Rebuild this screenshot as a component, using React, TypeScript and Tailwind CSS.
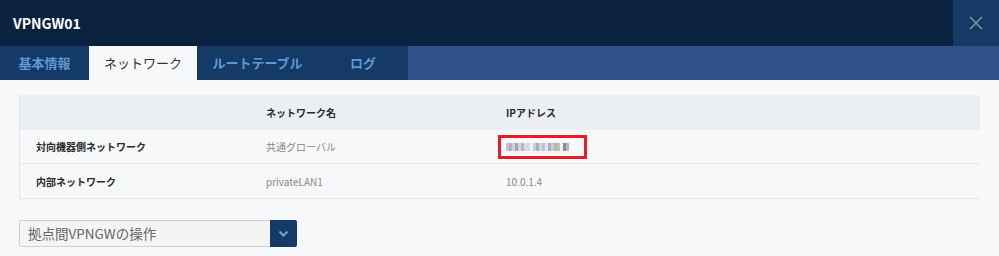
import React from "react";

const font = { fontFamily: '"Noto Sans CJK JP", "Noto Sans", sans-serif' };

function Mosaic() {
  const cells = [
    "#c9c2d3", "#b7aec4", "#d8d2c7", "#a99fb8", "#cfd6e4", "#b9b3c8", "#e0dcd2", "#d6d9e4",
    "#f2f2f4", "#c4cedf", "#9fb1cc", "#ddd7c9", "#c6c0cc", "#e2e7ef", "#b3a9c0", "#d3cdbe",
    "#a8b8d0", "#d8b79a", "#eef0f3", "#7f8fb0", "#c2b6a3",
  ];
  return (
    <div className="flex items-center h-[8px]">
      {cells.map((c, i) => (
        <span key={i} className="block w-[3px] h-[8px]" style={{ backgroundColor: c }} />
      ))}
    </div>
  );
}

export default function App() {
  return (
    <div className="w-[999px] h-[256px] bg-[#f7f8f9] overflow-hidden" style={font}>
      <div className="h-[46px] bg-[#0a2240] flex items-stretch">
        <div className="flex-1 flex items-center pl-[13px] text-white font-bold text-[14px]">VPNGW01</div>
        <div className="w-[46px] bg-[#163a66] flex items-center justify-center">
          <svg width="14" height="14" viewBox="0 0 14 14">
            <path d="M1 1 L13 13 M13 1 L1 13" stroke="#8b9aad" strokeWidth="1.4" />
          </svg>
        </div>
      </div>
      <div className="h-[34px] bg-[#30528a] flex items-stretch text-[13px]">
        <div className="w-[89px] bg-[#163a66] text-[#5d9ad8] font-bold flex items-center justify-center">基本情報</div>
        <div className="w-[108px] bg-[#f7f8f9] text-[#333] flex items-center justify-center">ネットワーク</div>
        <div className="w-[121px] bg-[#163a66] text-[#5d9ad8] font-bold flex items-center justify-center">ルートテーブル</div>
        <div className="w-[90px] bg-[#163a66] text-[#5d9ad8] font-bold flex items-center justify-center">ログ</div>
      </div>
      <div className="px-[19px] pt-[15px]">
        <div className="border-l border-b border-[#e3e5e8] text-[10px]">
          <div className="h-[35px] bg-[#eceff2] flex items-center font-bold text-[#2b2b2b]">
            <div className="w-[230px] pl-[16px]"></div>
            <div className="w-[240px] pl-[16px]">ネットワーク名</div>
            <div className="flex-1 pl-[16px]">IPアドレス</div>
          </div>
          <div className="h-[34px] flex items-center border-b border-[#e3e5e8]">
            <div className="w-[230px] pl-[16px] font-bold text-[#2b2b2b]">対向機器側ネットワーク</div>
            <div className="w-[240px] pl-[16px] text-[#888]">共通グローバル</div>
            <div className="flex-1 pl-[8px]">
              <div className="w-[89px] h-[24px] border-[3px] border-[#ea1b24] flex items-center pl-[5px]">
                <Mosaic />
              </div>
            </div>
          </div>
          <div className="h-[34px] flex items-center">
            <div className="w-[230px] pl-[16px] font-bold text-[#2b2b2b]">内部ネットワーク</div>
            <div className="w-[240px] pl-[16px] text-[#888]">privateLAN1</div>
            <div className="flex-1 pl-[16px] text-[#888]">10.0.1.4</div>
          </div>
        </div>
        <div className="mt-[21px] w-[278px] h-[27px] flex border border-[#cfd1d4] rounded-[2px] bg-[#f4f4f5]">
          <div className="flex-1 flex items-center pl-[8px] text-[13.5px] text-[#666]">拠点間VPNGWの操作</div>
          <div className="w-[27px] bg-[#143a66] flex items-center justify-center -my-px -mr-px rounded-r-[2px]">
            <svg width="11" height="7" viewBox="0 0 11 7">
              <path d="M1.5 1.5 L5.5 5.5 L9.5 1.5" stroke="#6fa3dc" strokeWidth="2" fill="none" />
            </svg>
          </div>
        </div>
      </div>
    </div>
  );
}
